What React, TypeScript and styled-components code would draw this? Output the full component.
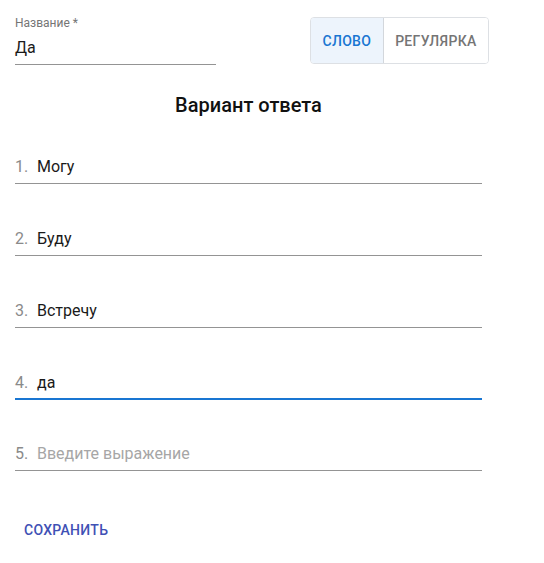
import React from "react";
import styled, { createGlobalStyle } from "styled-components";

const Global = createGlobalStyle`
  html, body { margin: 0; padding: 0; background: #ffffff; }
  body { font-family: Roboto, "Noto Sans", sans-serif; color: rgba(0,0,0,0.87); }
  * { box-sizing: border-box; }
`;

const Page = styled.div`
  width: 544px;
  height: 563px;
  padding: 0 0 0 15px;
  display: flex;
  flex-direction: column;
`;

const TopRow = styled.div`
  width: 474px;
  display: flex;
  justify-content: space-between;
  align-items: flex-start;
`;

const NameField = styled.div`
  width: 201px;
  display: flex;
  flex-direction: column;
  padding-top: 15px;
  border-bottom: 1px solid #949494;
`;

const Label = styled.label`
  font-size: 12px;
  line-height: 16px;
  color: #757575;
`;

const NameValue = styled.div`
  font-size: 16px;
  line-height: 19px;
  padding: 7px 0 7px;
  color: #1a1a1a;
`;

const Toggle = styled.div`
  margin-top: 17px;
  display: flex;
  border: 1px solid #dde0e4;
  border-radius: 4px;
  overflow: hidden;
  height: 47px;
`;

const ToggleOption = styled.button<{ $active?: boolean }>`
  font-family: Roboto, sans-serif;
  font-size: 14px;
  font-weight: 500;
  letter-spacing: 0.02em;
  text-transform: uppercase;
  border: none;
  border-left: ${(p) => (p.$active ? "none" : "1px solid #d3d7dc")};
  background: ${(p) => (p.$active ? "#edf4fc" : "#ffffff")};
  color: ${(p) => (p.$active ? "#1976d2" : "#757575")};
  padding: 0 11.5px;
  cursor: pointer;
`;

const Heading = styled.h2`
  width: 467px;
  margin: 28px 0 0;
  text-align: center;
  font-size: 20px;
  line-height: 24px;
  font-weight: 500;
  color: #111;
`;

const Answers = styled.div`
  width: 467px;
  display: flex;
  flex-direction: column;
  gap: 45px;
  margin-top: 40px;
`;

const AnswerRow = styled.div<{ $focused?: boolean }>`
  display: flex;
  align-items: baseline;
  height: 27px;
  font-size: 16px;
  line-height: 19px;
  border-bottom: ${(p) => (p.$focused ? "2px solid #1976d2" : "1px solid #949494")};
  margin-bottom: ${(p) => (p.$focused ? "-1px" : "0")};
`;

const Num = styled.span`
  color: #8a8a8a;
  width: 22px;
  flex-shrink: 0;
`;

const AnswerText = styled.span<{ $placeholder?: boolean }>`
  color: ${(p) => (p.$placeholder ? "#a6a6a6" : "#1a1a1a")};
`;

const SaveButton = styled.button`
  align-self: flex-start;
  margin: 41px 0 0 1px;
  background: transparent;
  border: none;
  padding: 6px 8px;
  font-family: Roboto, sans-serif;
  font-size: 14px;
  font-weight: 500;
  letter-spacing: 0.02em;
  line-height: 24px;
  color: #3f51b5;
  text-transform: uppercase;
  cursor: pointer;
`;

const answers = [
  { text: "Могу" },
  { text: "Буду" },
  { text: "Встречу" },
  { text: "да", focused: true },
  { text: "Введите выражение", placeholder: true },
];

export default function App() {
  return (
    <>
      <Global />
      <Page>
        <TopRow>
          <NameField>
            <Label>Название *</Label>
            <NameValue>Да</NameValue>
          </NameField>
          <Toggle>
            <ToggleOption $active>Слово</ToggleOption>
            <ToggleOption>Регулярка</ToggleOption>
          </Toggle>
        </TopRow>
        <Heading>Вариант ответа</Heading>
        <Answers>
          {answers.map((a, i) => (
            <AnswerRow key={i} $focused={a.focused}>
              <Num>{i + 1}.</Num>
              <AnswerText $placeholder={a.placeholder}>{a.text}</AnswerText>
            </AnswerRow>
          ))}
        </Answers>
        <SaveButton>Сохранить</SaveButton>
      </Page>
    </>
  );
}
